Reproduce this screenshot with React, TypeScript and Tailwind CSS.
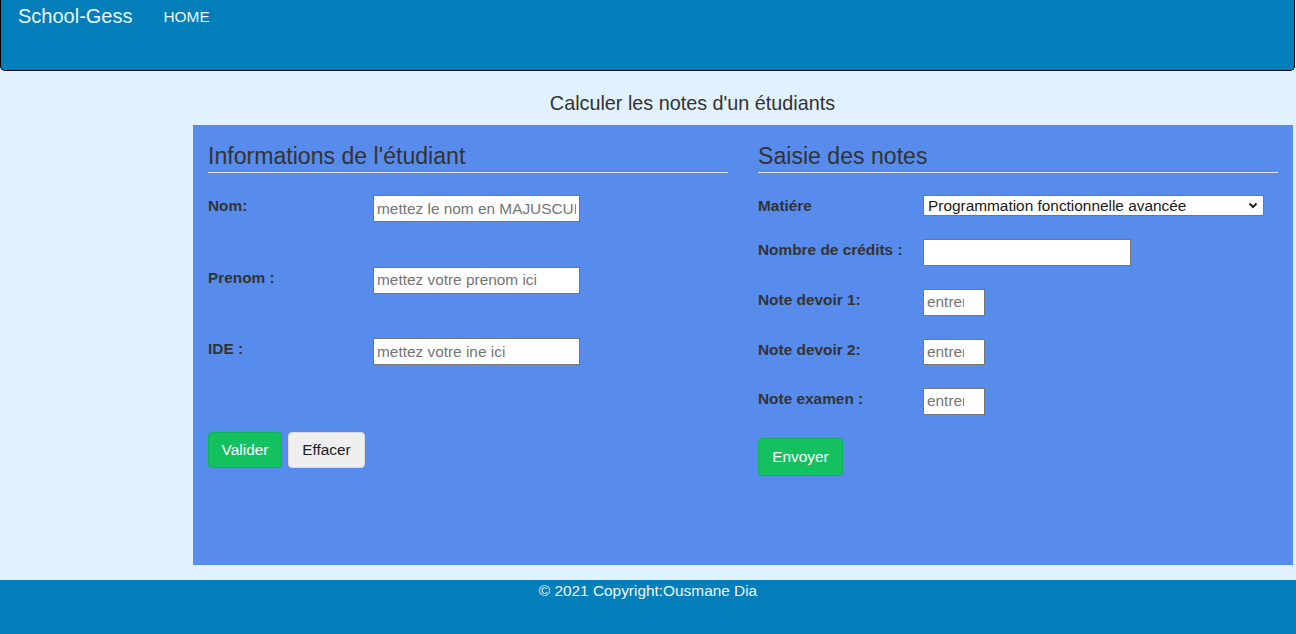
const labelCls = "w-[165px] shrink-0 mt-[2px] text-[15.4px] leading-[18px] font-bold text-[#333]";
const inputCls =
  "block bg-white border border-[#767676] pl-[3px] text-[15.4px] text-[#222] outline-none placeholder:text-[#757575]";

function Heading({ children }: { children: string }) {
  return (
    <h2 className="h-[30px] border-b border-[#e4e4e4] text-[23.1px] leading-[27px] text-[#333]">
      {children}
    </h2>
  );
}

function Row({ label, children }: { label: string; children: React.ReactNode }) {
  return (
    <div className="flex items-start">
      <label className={labelCls}>{label}</label>
      {children}
    </div>
  );
}

export default function App() {
  return (
    <div className="min-h-[634px] bg-[#e1f1fe] font-['Liberation_Sans',Arial,sans-serif]">
      <header className="w-[1295px] h-[71px] bg-[#027eba] border border-t-0 border-black rounded-b-[5px] flex items-start pl-[17px] text-[#eef7ff]">
        <span className="mt-[5px] text-[20px] leading-[23px]">School-Gess</span>
        <nav className="ml-[31px] mt-[8px] text-[15.4px] leading-[18px]">HOME</nav>
      </header>

      <div className="pl-[89px] pt-[20px] pb-[10px] text-center text-[19.8px] leading-[24px] text-[#333]">
        Calculer les notes d'un étudiants
      </div>

      <main className="ml-[193px] w-[1100px] h-[440px] bg-[#578bec] pt-[18px] flex">
        <section className="w-[550px] px-[15px]">
          <Heading>Informations de l'étudiant</Heading>
          <div className="mt-[22px] flex flex-col gap-[44.5px]">
            <Row label="Nom:">
              <input className={`${inputCls} pr-[3px] w-[207px] h-[27px]`} placeholder="mettez le nom en MAJUSCULE" />
            </Row>
            <Row label="Prenom :">
              <input className={`${inputCls} pr-[3px] w-[207px] h-[27px]`} placeholder="mettez votre prenom ici" />
            </Row>
            <Row label="IDE :">
              <input className={`${inputCls} pr-[3px] w-[207px] h-[27px]`} placeholder="mettez votre ine ici" />
            </Row>
          </div>
          <div className="mt-[67px] flex gap-[6px]">
            <button className="w-[74px] h-[36px] rounded-[4px] bg-[#13c25f] border border-[#10b257] text-white text-[15.4px]">
              Valider
            </button>
            <button className="w-[77px] h-[36px] rounded-[4px] bg-[#efefef] border border-[#dadada] text-[#222] text-[15.4px]">
              Effacer
            </button>
          </div>
        </section>

        <section className="w-[550px] px-[15px]">
          <Heading>Saisie des notes</Heading>
          <div className="mt-[22px] flex flex-col gap-[23px]">
            <Row label="Matiére">
              <div className="relative h-[21px]">
                <select className="block appearance-none w-[341px] h-[21px] bg-white border border-[#767676] rounded-[2px] pl-[4px] text-[15.4px] leading-[18px] text-[#1a1a1a] outline-none">
                  <option>Programmation fonctionnelle avancée</option>
                  <option>Algorithmique</option>
                  <option>Base de données</option>
                </select>
                <svg className="absolute right-[6px] top-[7px] pointer-events-none" width="10" height="7" viewBox="0 0 10 7">
                  <path d="M1.5 1.5 L5 5 L8.5 1.5" fill="none" stroke="#222" strokeWidth="2" />
                </svg>
              </div>
            </Row>
            <Row label="Nombre de crédits :">
              <input type="number" className={`${inputCls} pr-[3px] w-[208px] h-[27px]`} />
            </Row>
            <Row label="Note devoir 1:">
              <input type="text" className={`${inputCls} pr-[20px] w-[62px] h-[26.5px]`} placeholder="entrer la note" />
            </Row>
            <Row label="Note devoir 2:">
              <input type="text" className={`${inputCls} pr-[20px] w-[62px] h-[26.5px]`} placeholder="entrer la note" />
            </Row>
            <Row label="Note examen :">
              <input type="text" className={`${inputCls} pr-[20px] w-[62px] h-[26.5px]`} placeholder="entrer la note" />
            </Row>
            <div>
              <button className="w-[85px] h-[38px] rounded-[4px] bg-[#13c25f] border border-[#10b257] text-white text-[15.4px]">
                Envoyer
              </button>
            </div>
          </div>
        </section>
      </main>

      <footer className="mt-[15px] h-[54px] bg-[#027eba] pt-[2px] text-center text-[15.4px] leading-[18px] text-[#eef7ff]">
        © 2021 Copyright:Ousmane Dia
      </footer>
    </div>
  );
}
